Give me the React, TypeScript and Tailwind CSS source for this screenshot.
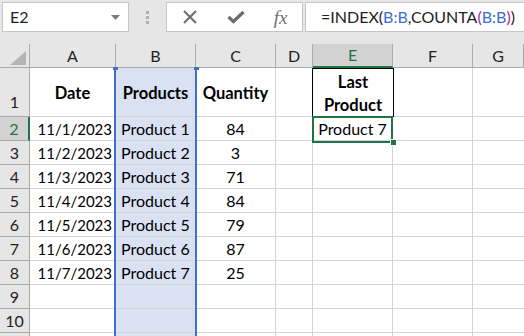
import React from "react";

const font = { fontFamily: "Lato, 'Noto Sans', sans-serif" };

const rows: { n: string; a: string; b: string; c: string }[] = [
  { n: "2", a: "11/1/2023", b: "Product 1", c: "84" },
  { n: "3", a: "11/2/2023", b: "Product 2", c: "3" },
  { n: "4", a: "11/3/2023", b: "Product 3", c: "71" },
  { n: "5", a: "11/4/2023", b: "Product 4", c: "84" },
  { n: "6", a: "11/5/2023", b: "Product 5", c: "79" },
  { n: "7", a: "11/6/2023", b: "Product 6", c: "87" },
  { n: "8", a: "11/7/2023", b: "Product 7", c: "25" },
  { n: "9", a: "", b: "", c: "" },
  { n: "10", a: "", b: "", c: "" },
  { n: "", a: "", b: "", c: "" },
];

const cell = "border-r border-b border-[#d4d4d4] h-[24px] flex items-end pb-[2px] text-[15px] text-black leading-[18px] overflow-hidden whitespace-nowrap";

export default function App() {
  return (
    <div className="w-[524px] h-[336px] overflow-hidden bg-white relative select-none" style={font}>
      {/* toolbar */}
      <div className="h-[44px] bg-[#e6e6e6] flex items-start pt-[2px] pl-[2px]">
        <div className="w-[127px] h-[30px] bg-white border border-[#c6c6c6] flex items-center pl-[7px] pr-[8px] justify-between">
          <span className="text-[16px] text-[#222]">E2</span>
          <svg width="9" height="5" viewBox="0 0 9 5"><path d="M0 0 L9 0 L4.5 5 Z" fill="#7a7a7a" /></svg>
        </div>
        <div className="w-[37px] h-[30px] flex flex-col items-center justify-center gap-[2px]">
          <div className="w-[3px] h-[3px] bg-[#b0b0b0]" />
          <div className="w-[3px] h-[3px] bg-[#b0b0b0]" />
          <div className="w-[3px] h-[3px] bg-[#b0b0b0]" />
        </div>
        <div className="w-[137px] h-[30px] bg-white border border-[#c6c6c6] flex items-center">
          <div className="w-[46px] flex justify-center">
            <svg width="16" height="16" viewBox="0 0 16 16"><path d="M2 2 L14 14 M14 2 L2 14" stroke="#6b6b6b" strokeWidth="2" /></svg>
          </div>
          <div className="w-[46px] flex justify-center">
            <svg width="18" height="14" viewBox="0 0 18 14"><path d="M1.5 7 L6.5 11.5 L16.5 2" stroke="#6b6b6b" strokeWidth="3.2" fill="none" /></svg>
          </div>
          <div className="w-[43px] flex justify-center">
            <span className="text-[19px] italic text-[#707070] leading-none" style={{ fontFamily: "'Liberation Serif', serif" }}>fx</span>
          </div>
        </div>
        <div className="ml-[2px] flex-1 h-[30px] bg-white border border-[#c6c6c6] border-r-0 flex items-center pl-[15px]">
          <span className="text-[16px] text-[#222] whitespace-nowrap">
            =INDEX(<span className="text-[#3a6fd0]">B:B</span>,COUNTA<span className="text-[#b0209a]">(</span><span className="text-[#3a6fd0]">B:B</span><span className="text-[#b0209a]">)</span>)
          </span>
        </div>
      </div>

      {/* grid */}
      <div className="grid grid-cols-[30px_86px_80px_80px_37px_80px_80px_1fr]">
        {/* header row */}
        <div className="h-[24px] bg-[#e6e6e6] border-r border-b border-[#ababab] relative">
          <svg className="absolute left-[10px] top-[7px]" width="16" height="14" viewBox="0 0 16 14"><path d="M16 0 L16 14 L0 14 Z" fill="#b4b4b4" /></svg>
        </div>
        {["A", "B", "C", "D", "E", "F", "G"].map((c) => (
          <div
            key={c}
            className={
              c === "E"
                ? "h-[24px] bg-[#d2d2d2] border-r border-[#ababab] border-b-2 border-b-[#217346] flex items-center justify-center text-[16px] text-[#217346]"
                : "h-[24px] bg-[#e6e6e6] border-r border-b border-[#ababab] flex items-center justify-center text-[16px] text-[#222]"
            }
          >
            {c}
          </div>
        ))}

        {/* row 1 */}
        <div className="h-[49px] bg-[#e6e6e6] border-r border-b border-[#ababab] flex items-end justify-center pb-[2px] text-[16px] text-[#222]">1</div>
        <div className="h-[49px] border-r border-b border-[#d4d4d4] flex items-center justify-center font-bold text-[16.5px] pt-[3px]">Date</div>
        <div className="h-[49px] border-r border-b border-[#d4d4d4] bg-[#d9e1f2] flex items-center justify-center font-bold text-[16.5px] pt-[3px]">Products</div>
        <div className="h-[49px] border-r border-b border-[#d4d4d4] flex items-center justify-center font-bold text-[16.5px] pt-[3px]">Quantity</div>
        <div className="h-[49px] border-r border-b border-[#d4d4d4]" />
        <div className="h-[49px] border-b border-[#d4d4d4] relative flex flex-col items-center justify-center font-bold text-[16.5px] leading-[23px] pt-[4px]">
          <div className="absolute left-[-1px] right-[-1px] top-0 bottom-[-1px] border border-black" />
          <span>Last</span>
          <span>Product</span>
        </div>
        <div className="h-[49px] border-r border-b border-[#d4d4d4]" />
        <div className="h-[49px] border-b border-[#d4d4d4]" />

        {rows.map((r, i) => (
          <React.Fragment key={i}>
            <div
              className={
                r.n === "2"
                  ? "h-[24px] bg-[#d2d2d2] border-r-2 border-r-[#217346] border-b border-b-[#ababab] flex items-end justify-center pb-[2px] text-[16px] leading-[18px] text-[#217346]"
                  : "h-[24px] bg-[#e6e6e6] border-r border-b border-[#ababab] flex items-end justify-center pb-[2px] text-[16px] leading-[18px] text-[#222]"
              }
            >
              {r.n}
            </div>
            <div className={cell + " justify-end pr-[3px]"}>{r.a}</div>
            <div className={cell + " bg-[#d9e1f2] pl-[5px] text-[16px]"}>{r.b}</div>
            <div className={cell + " justify-center text-[16px]"}>{r.c}</div>
            <div className={cell} />
            <div className={cell + " justify-center text-[16px]"}>{r.n === "2" ? "Product 7" : ""}</div>
            <div className={cell} />
            <div className={cell + " border-r-0"} />
          </React.Fragment>
        ))}
      </div>

      {/* Column B selection overlay */}
      <div className="absolute left-[114px] top-[68px] w-[83px] h-[280px] border-x-2 border-[#3f6fc6] pointer-events-none" />
      <div className="absolute left-[113px] top-[67px] w-[5px] h-[3px] bg-[#3f6fc6]" />
      <div className="absolute left-[194px] top-[67px] w-[5px] h-[3px] bg-[#3f6fc6]" />

      {/* E2 active cell */}
      <div className="absolute left-[312px] top-[116px] w-[81px] h-[27px] border-2 border-[#217346] pointer-events-none" />
      <div className="absolute left-[390px] top-[139px] w-[5px] h-[5px] bg-[#217346] border border-white box-content" />
    </div>
  );
}
